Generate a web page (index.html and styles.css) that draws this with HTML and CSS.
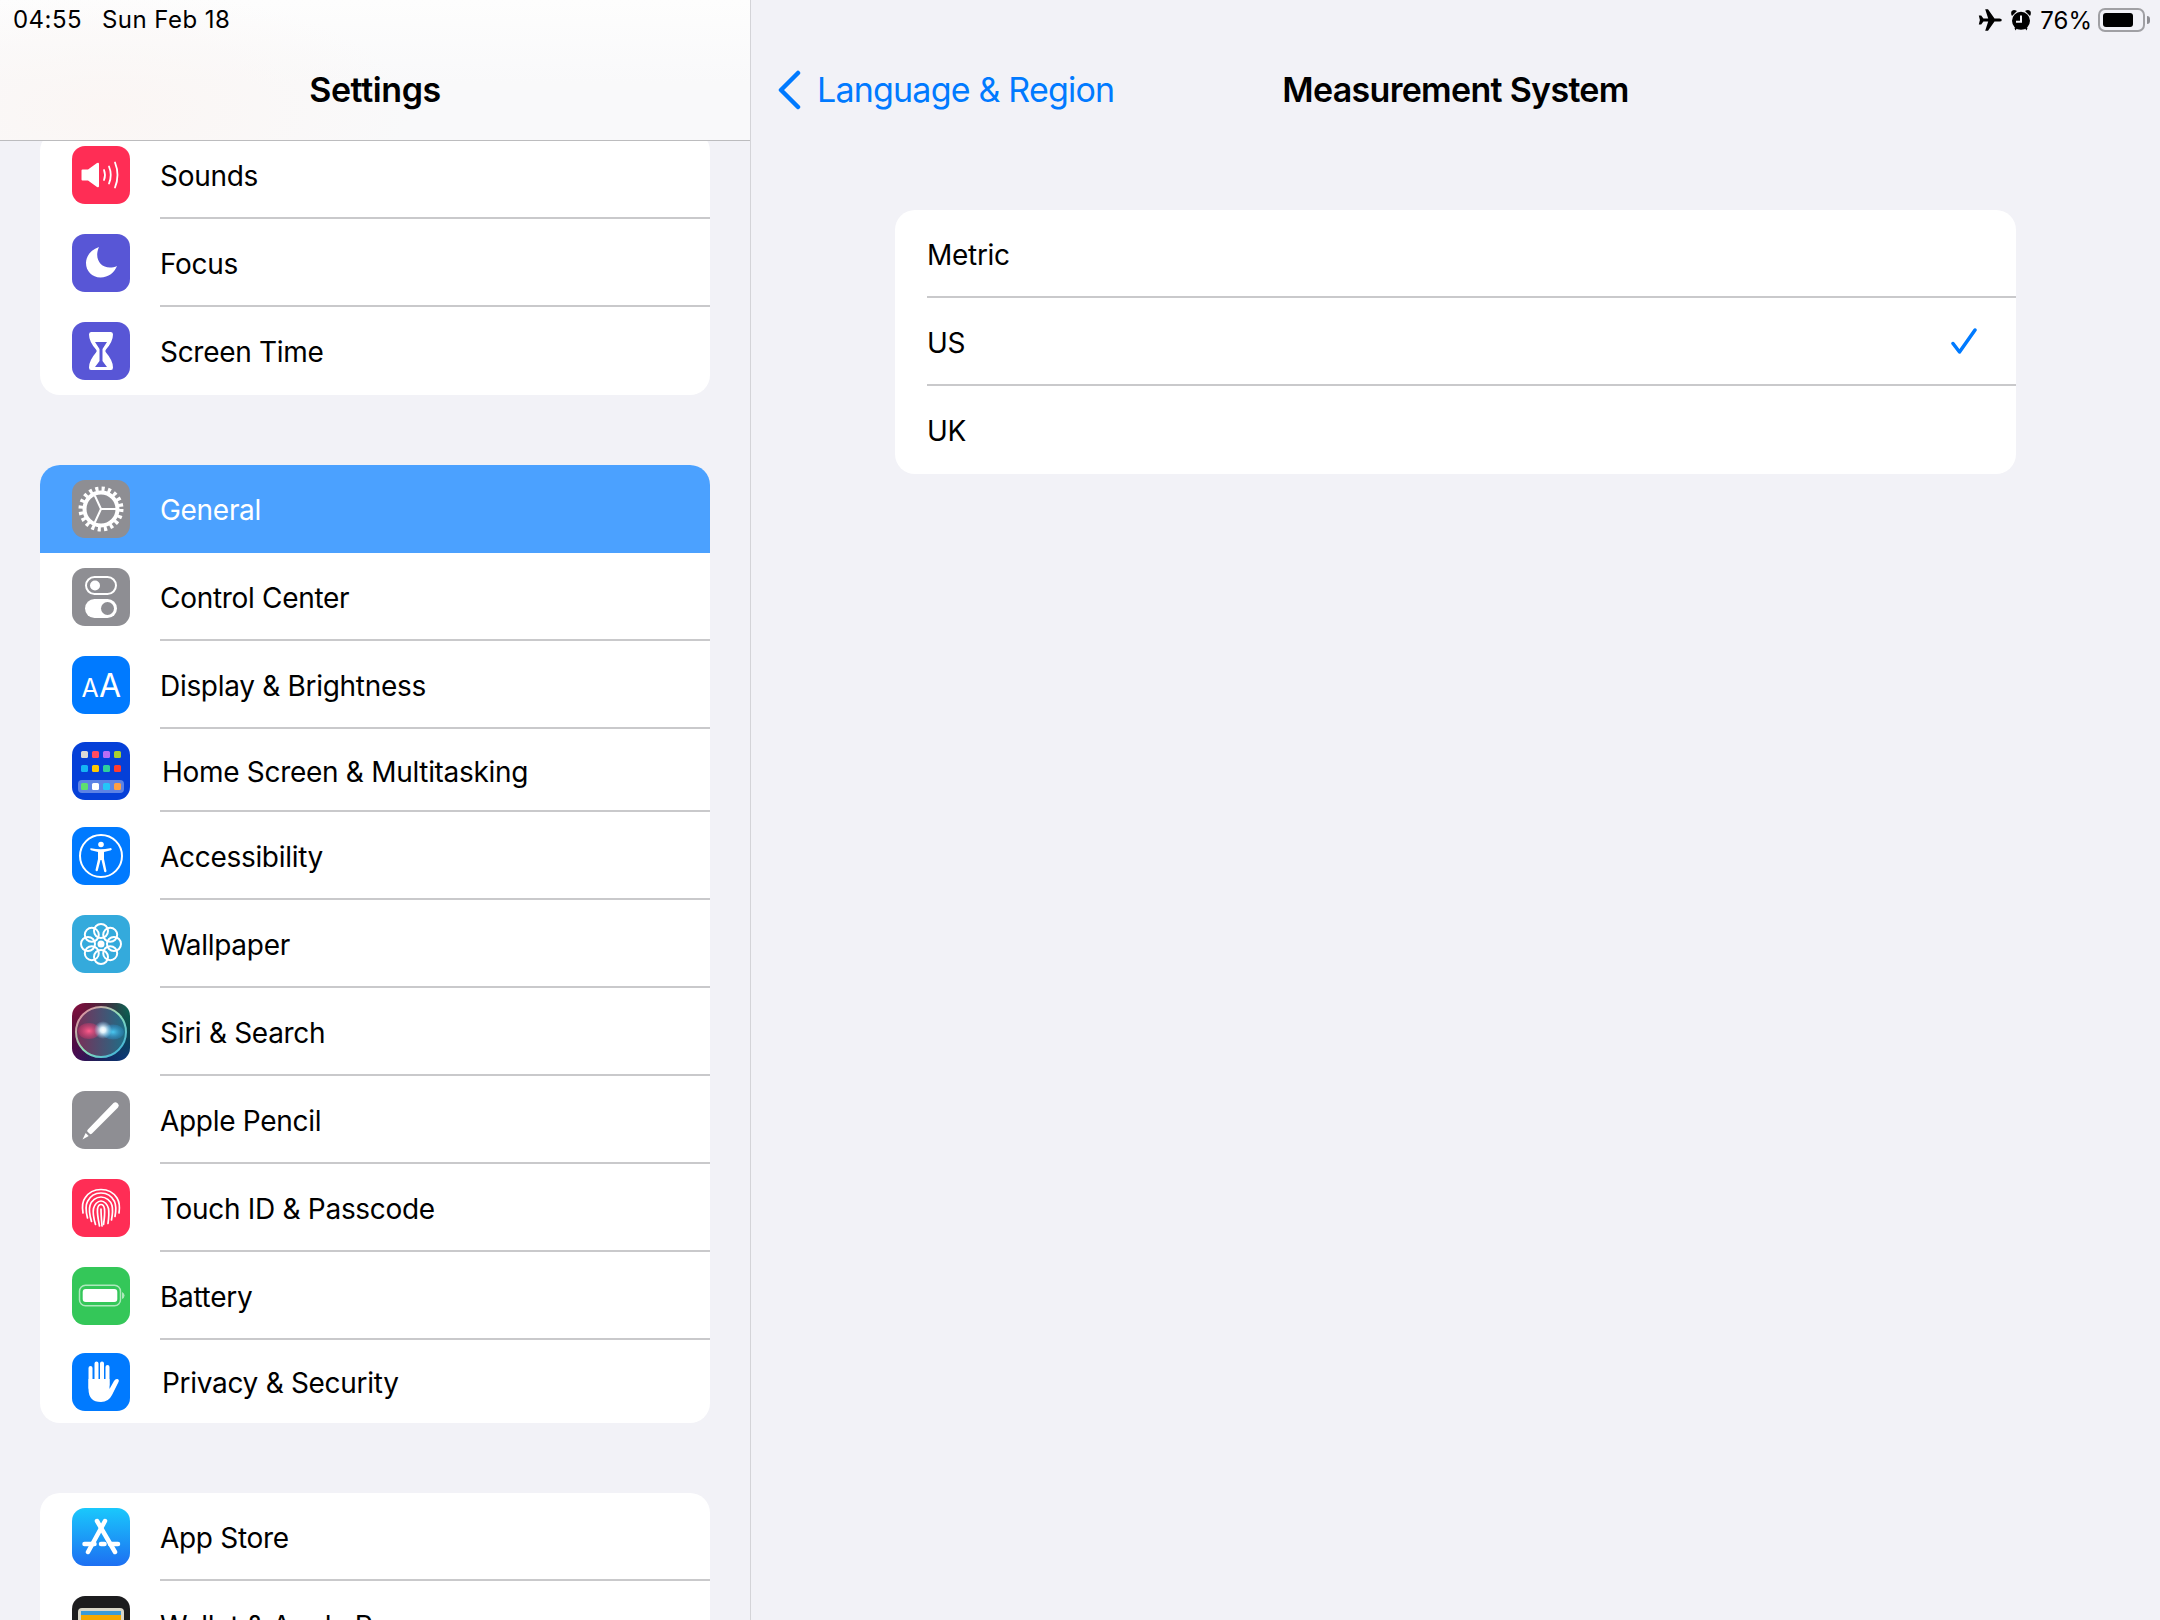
FILE: index.html
```html
<!DOCTYPE html>
<html lang="en">
<head>
<meta charset="utf-8">
<title>Settings</title>
<link rel="stylesheet" href="styles.css">
</head>
<body>
<div class="app">
  <aside class="sidebar">
    <header class="side-head">
      <div class="side-status"><span>04:55</span><span>Sun Feb 18</span></div>
      <h1 class="side-title">Settings</h1>
    </header>
    <div class="side-list">
      <section class="group">
        <div class="row">
          <span class="icon red"><svg viewBox="0 0 58 58"><path class="w" d="M10.500 23.500H16l9-6.500q2-1 2 1v22q0 2-2 1l-9-6.500h-5.500q-1 0-1-1V24.500q0-1 1-1z"/><g class="ln" stroke-width="1.800"><path d="M32 24q2 5 0 10"/><path d="M37 20.500q3.500 8.500 0 17"/><path d="M43 16.500q5 12.500 0 25"/></g></svg></span>
          <span class="label">Sounds</span>
        </div>
        <div class="row">
          <span class="icon indigo"><svg viewBox="0 0 58 58"><path class="w" d="M27 13C18 16 14 23 14 29c0 8 6 14.500 14.500 14.500 8 0 14-5 16.500-11.500-2 1-5 1.500-7 1.500C28 33.500 22 24 27 13z"/></svg></span>
          <span class="label">Focus</span>
        </div>
        <div class="row last">
          <span class="icon indigo"><svg viewBox="0 0 58 58"><path class="w" d="M19 10h20q2 0 2 2.500 0 7-7 15-1.500 1.500 0 3 7 8 7 15 0 2.500-2 2.500H19q-2 0-2-2.500 0-7 7-15 1.500-1.500 0-3-7-8-7-15 0-2.500 2-2.500z"/><path fill="#5856d6" d="M23 20h12l-4.500 7v12l4.500 6H23l4.500-6V27z"/></svg></span>
          <span class="label">Screen Time</span>
        </div>
      </section>

      <section class="group">
        <div class="row selected">
          <span class="icon gray"><svg viewBox="0 0 58 58"><circle class="ring" cx="29" cy="29" r="16.500" stroke-width="4"/><circle class="ring" cx="29" cy="29" r="20" stroke-width="5" stroke-dasharray="3.100 3.183"/><g class="ln" stroke-width="2"><path d="M29 29l-6-13M29 29h16M29 29l-6 13"/></g></svg></span>
          <span class="label">General</span>
        </div>
        <div class="row">
          <span class="icon gray"><svg viewBox="0 0 58 58"><rect class="ln" x="14" y="9" width="30" height="17" rx="8.500" stroke-width="2"/><circle class="w" cx="23" cy="17.500" r="5"/><rect class="w" x="13" y="31" width="32" height="19" rx="9.500"/><circle fill="#8e8e93" cx="35.500" cy="40.500" r="6.500"/></svg></span>
          <span class="label">Control Center</span>
        </div>
        <div class="row">
          <span class="icon blue"><svg viewBox="0 0 58 58"><text class="aa-s" x="9.500" y="41">A</text><text class="aa-l" x="27" y="41">A</text></svg></span>
          <span class="label">Display &amp; Brightness</span>
        </div>
        <div class="row short">
          <span class="icon royal"><svg viewBox="0 0 58 58">
            <rect fill="#d9d9d6" x="9" y="9" width="7" height="7" rx="1.500"/><rect fill="#ff4b5f" x="20" y="9" width="7" height="7" rx="1.500"/><rect fill="#b96df5" x="31" y="9" width="7" height="7" rx="1.500"/><rect fill="#a8d030" x="42" y="9" width="7" height="7" rx="1.500"/>
            <rect fill="#14b4f5" x="9" y="23" width="7" height="7" rx="1.500"/><rect fill="#ffc800" x="20" y="23" width="7" height="7" rx="1.500"/><rect fill="#2ecf9c" x="31" y="23" width="7" height="7" rx="1.500"/><rect fill="#ff3b30" x="42" y="23" width="7" height="7" rx="1.500"/>
            <rect fill="#fff" fill-opacity=".35" x="6" y="38" width="46" height="13" rx="4"/>
            <rect fill="#5ee06e" x="9" y="41" width="7" height="7" rx="1.500"/><rect fill="#fff" x="20" y="41" width="7" height="7" rx="1.500"/><rect fill="#25c5f8" x="31" y="41" width="7" height="7" rx="1.500"/><rect fill="#ff9f43" x="42" y="41" width="7" height="7" rx="1.500"/>
          </svg></span>
          <span class="label">Home Screen &amp; Multitasking</span>
        </div>
        <div class="row">
          <span class="icon blue"><svg viewBox="0 0 58 58"><circle class="ln" cx="29" cy="29" r="21" stroke-width="2"/><circle class="w" cx="29" cy="17.500" r="2.800"/><path class="w" d="M18.500 21.500q-.8 1.200.5 1.800l7 1.700v7l-2.500 11q0 1 1 1.200 1 .2 1.300-.8L28.500 33h1l2.700 11.400q.3 1 1.300.8 1-.2 1-1.200L32 32v-7l7-1.700q1.300-.6.5-1.800-.5-.6-1.500-.3-9.500 2.300-19 0-1-.3-.5.300z"/></svg></span>
          <span class="label">Accessibility</span>
        </div>
        <div class="row">
          <span class="icon sky"><svg viewBox="0 0 58 58"><g class="ln" stroke-width="2"><circle cx="29" cy="16" r="7"/><circle cx="29" cy="42" r="7"/><circle cx="16" cy="29" r="7"/><circle cx="42" cy="29" r="7"/><circle cx="19.800" cy="19.800" r="7"/><circle cx="38.200" cy="19.800" r="7"/><circle cx="19.800" cy="38.200" r="7"/><circle cx="38.200" cy="38.200" r="7"/></g><circle class="w" cx="29" cy="29" r="3.500"/></svg></span>
          <span class="label">Wallpaper</span>
        </div>
        <div class="row">
          <span class="icon siri"><svg viewBox="0 0 58 58">
            <defs>
              <linearGradient id="rim" x1="0" y1="0" x2="1" y2="1"><stop offset="0" stop-color="#f07a98"/><stop offset=".5" stop-color="#8fe0b8"/><stop offset="1" stop-color="#2fa8e0"/></linearGradient>
              <linearGradient id="disc" x1="0" y1="0" x2="1" y2="0"><stop offset="0" stop-color="#7a2f58"/><stop offset="1" stop-color="#1c6f88"/></linearGradient>
              <radialGradient id="core"><stop offset="0" stop-color="#fff"/><stop offset=".3" stop-color="#e8f8ff" stop-opacity=".95"/><stop offset="1" stop-color="#8fd8ff" stop-opacity="0"/></radialGradient>
              <radialGradient id="pink"><stop offset="0" stop-color="#ff5c8c"/><stop offset="1" stop-color="#e0386c" stop-opacity=".35"/></radialGradient>
              <radialGradient id="teal"><stop offset="0" stop-color="#4ac8f0"/><stop offset="1" stop-color="#2a8fc8" stop-opacity=".35"/></radialGradient>
            </defs>
            <circle cx="29" cy="29" r="25" fill="url(#disc)" stroke="url(#rim)" stroke-width="2"/>
            <ellipse cx="17" cy="28" rx="11" ry="8" fill="url(#pink)"/>
            <ellipse cx="41" cy="29" rx="11" ry="7.500" fill="url(#teal)"/>
            <circle cx="31" cy="27" r="9" fill="url(#core)"/>
          </svg></span>
          <span class="label">Siri &amp; Search</span>
        </div>
        <div class="row">
          <span class="icon gray"><svg viewBox="0 0 58 58"><path class="w" d="M41.500 12q2-1.700 3.700 0l.8.800q1.700 1.800 0 3.700L20 42.500q-1 1-2 .6l-2.700-2.700q-.4-1 .6-2z"/><path class="w" d="M10.500 48.500l3.200-6.500 3 3z"/></svg></span>
          <span class="label">Apple Pencil</span>
        </div>
        <div class="row">
          <span class="icon red"><svg viewBox="0 0 58 58"><g class="ln" stroke-width="1.700"><path d="M11 34c-1-6-1-11 2-15 3.500-5.500 9.500-8.500 16-8.500s12.500 3 16 8.500c2.500 4 3 8.500 2 15"/><path d="M15.500 39c-1.500-6-2.500-12 0-16.500C18 17.500 23 14 29 14s11 3.500 13.500 8.500c2 4.500 1.500 9.500.5 15"/><path d="M19.500 42.500c-1.500-5-3-11-1.500-16 1.500-5 6-8.500 11-8.500s9.500 3.500 11 8.500c1 4 .5 9-.5 14.500"/><path d="M23.500 45.500c-1.500-5-3-11-2-16 1-4 4-7.500 7.500-7.500s6.500 3.500 7.500 7.500c.7 4 .3 9-.5 15"/><path d="M27.500 47c-1-5-2.500-12-2-17 .3-2 1.500-4.500 3.500-4.500s3.200 2.500 3.500 4.500c.4 4 0 9-1 15.500"/><path d="M29 30c0 5 .5 11 1 17"/></g></svg></span>
          <span class="label">Touch ID &amp; Passcode</span>
        </div>
        <div class="row">
          <span class="icon green"><svg viewBox="0 0 58 58"><rect fill="none" stroke="#fff" stroke-opacity=".6" stroke-width="1.500" x="7.500" y="18.200" width="41" height="20.600" rx="6"/><rect class="w" x="10.700" y="22" width="34.600" height="13" rx="3"/><path fill="#fff" fill-opacity=".6" d="M50 25q2.500 1 2.500 3.500T50 32z"/></svg></span>
          <span class="label">Battery</span>
        </div>
        <div class="row short last">
          <span class="icon blue"><svg viewBox="0 0 58 58"><g class="ln" stroke-width="4"><path d="M18.500 35V15M24.500 30V10.500M30 30V10.500M35.500 32V14"/></g><path class="w" d="M16.500 26h21v10l4.500-8q1.500-2.500 3.500-2 2 .6 1 3L40 42q-3.500 7-11 7-12.500 0-12.500-13z"/></svg></span>
          <span class="label">Privacy &amp; Security</span>
        </div>
      </section>

      <section class="group">
        <div class="row">
          <span class="icon store"><svg viewBox="0 0 58 58"><g class="ln" stroke-width="4.500"><path d="M33 13 16 44"/><path d="M25 13l18 31"/><path d="M12.500 36h10M29 36h3.500M38 36h8"/></g></svg></span>
          <span class="label">App Store</span>
        </div>
        <div class="row last">
          <span class="icon wallet"><svg viewBox="0 0 58 58"><rect fill="#d9d6c8" x="6" y="12" width="46" height="38" rx="4"/><rect fill="#3a9bd8" x="9" y="15" width="40" height="6"/><rect fill="#f5a800" x="9" y="19" width="40" height="8"/><rect fill="#4cb050" x="9" y="26" width="40" height="8"/><rect fill="#e84a3c" x="9" y="33" width="40" height="8"/></svg></span>
          <span class="label">Wallet &amp; Apple Pay</span>
        </div>
      </section>
    </div>
  </aside>

  <main class="detail">
    <div class="status">
      <svg class="st-plane" viewBox="0 0 24 24"><path d="M23.800 12q0-1.600-2.300-1.600h-5L10 1.200H7.200l3 9.200H5.400L3.200 7.500H.8L1.900 12 .8 16.500h2.400l2.200-2.900h4.800l-3 9.200H10l6.500-9.200h5q2.300 0 2.300-1.600z"/></svg>
      <svg class="st-alarm" viewBox="0 0 20 22"><path d="M1 7 6 2Q2-.2.400 2.600-.3 5 1 7zM19 7l-5-5q4-2.200 5.600.6.700 2.400-.6 4.400z"/><path fill-rule="evenodd" d="M10 2.800a9 9 0 1 1 0 18 9 9 0 0 1 0-18zM9 6.500v5.300H5v1.900h6V6.500z"/><path d="M3.500 19l2-1.500 1 1L4.500 21.500zM16.500 19l-2-1.500-1 1 2 3z"/></svg>
      <span class="st-pct">76%</span>
      <span class="st-batt"><span class="st-fill"></span></span>
      <span class="st-nub"></span>
    </div>
    <nav class="nav">
      <a class="back"><svg class="chev" viewBox="0 0 24 40"><path d="M21 3 4 20l17 17"/></svg><span>Language &amp; Region</span></a>
      <h2 class="nav-title">Measurement System</h2>
    </nav>
    <section class="card">
      <div class="opt"><span>Metric</span></div>
      <div class="opt"><span>US</span><svg class="check" viewBox="0 0 28 26"><path d="M3 15.500 9.500 24 25 2"/></svg></div>
      <div class="opt"><span>UK</span></div>
    </section>
  </main>
</div>
</body>
</html>
```
FILE: styles.css
```css
* { box-sizing: border-box; }
html, body { margin: 0; padding: 0; }
body {
  width: 2160px;
  height: 1620px;
  overflow: hidden;
  background: #f2f2f7;
  color: #000;
  font-family: Inter, "Noto Sans", "Liberation Sans", sans-serif;
}
.app { display: flex; height: 1620px; }

/* Sidebar */
.sidebar {
  position: relative;
  width: 751px;
  height: 1620px;
  flex: none;
  overflow: hidden;
  border-right: 1px solid #d4d4d8;
  background: #f2f2f7;
}
.side-head {
  position: absolute;
  top: 0;
  left: 0;
  right: 0;
  z-index: 2;
  height: 141px;
  border-bottom: 1px solid #bcbcbe;
  background:
    radial-gradient(ellipse 300px 120px at 110px 110px, #fbf6f4, transparent),
    linear-gradient(180deg, #fdfdfd 0%, #f9f9fa 60%, #f9f9fa 100%);
}
.side-status {
  display: flex;
  gap: 20px;
  height: 40px;
  padding: 0 0 1px 13px;
  align-items: center;
  font-size: 24px;
  letter-spacing: .45px;
}
.side-title {
  margin: 0;
  height: 98px;
  display: flex;
  align-items: center;
  justify-content: center;
  font-size: 34px;
  font-weight: 600;
  letter-spacing: -.4px;
}
.side-list { padding: 131px 40px 0; }

.group {
  background: #fff;
  border-radius: 20px;
  overflow: hidden;
  margin-bottom: 70px;
}
.row {
  display: flex;
  align-items: center;
  height: 88px;
  padding-left: 32px;
  gap: 30px;
}
.row.short { height: 83px; }
.row.short .label { padding-left: 2px; }
.label {
  flex: 1;
  display: flex;
  align-items: center;
  height: 100%;
  padding-top: 4px;
  font-size: 28px;
  letter-spacing: -.3px;
  border-bottom: 2px solid #c9c9cb;
}
.row.last .label,
.row.selected .label { border-bottom-color: transparent; }
.row.selected { background: #4ba1ff; color: #fff; }

.icon {
  display: block;
  flex: none;
  width: 58px;
  height: 58px;
  border-radius: 13px;
  overflow: hidden;
}
.icon svg { display: block; width: 58px; height: 58px; }
.w { fill: #fff; }
.ln { fill: none; stroke: #fff; stroke-linecap: round; stroke-linejoin: round; }
.ln * { fill: none; }
.ring { fill: none; stroke: #fff; }
.red { background: #ff2d55; }
.indigo { background: #5856d6; }
.gray { background: #8e8e93; }
.blue { background: #007aff; }
.royal { background: #0540d8; }
.sky { background: #34aadc; }
.green { background: #34c759; }
.store { background: linear-gradient(180deg, #1ac8fc, #1d6ff2); }
.wallet { background: #1c1c1e; }
.siri {
  background:
    radial-gradient(circle at 0 0, #8a0f42, transparent 70%),
    radial-gradient(circle at 100% 0, #0c6a58, transparent 70%),
    radial-gradient(circle at 100% 100%, #0a3a80, transparent 70%),
    radial-gradient(circle at 0 100%, #4a0a5a, transparent 70%),
    #101018;
}
.aa-s { font-size: 25px; font-weight: 400; fill: #fff; }
.aa-l { font-size: 32px; font-weight: 400; fill: #fff; }

/* Detail */
.detail { flex: 1; min-width: 0; display: flex; flex-direction: column; }
.status {
  display: flex;
  align-items: center;
  justify-content: flex-end;
  height: 40px;
  padding-right: 10px;
}
.st-plane { width: 24px; height: 24px; margin-right: 9px; fill: #000; }
.st-alarm { width: 20px; height: 22px; margin-right: 9px; fill: #000; }
.st-pct { font-size: 24px; margin-right: 6px; }
.st-batt {
  display: block;
  width: 47px;
  height: 24px;
  border: 2px solid #a0a0a4;
  border-radius: 7px;
  padding: 3px;
}
.st-fill { display: block; width: 30px; height: 14px; background: #000; border-radius: 3px; }
.st-nub {
  display: block;
  width: 3px;
  height: 8px;
  margin-left: 2px;
  background: #8e8e93;
  border-radius: 0 3px 3px 0;
}
.nav {
  display: grid;
  grid-template-columns: 1fr auto 1fr;
  align-items: center;
  height: 100px;
}
.back {
  display: flex;
  align-items: center;
  gap: 16px;
  padding-left: 26px;
  color: #007aff;
  font-size: 34px;
  letter-spacing: -.8px;
}
.back span { padding-bottom: 2px; }
.chev { width: 24px; height: 40px; fill: none; stroke: #007aff; stroke-width: 4.500; stroke-linecap: round; stroke-linejoin: round; }
.nav-title {
  grid-column: 2;
  margin: 0;
  padding-bottom: 2px;
  font-size: 34px;
  font-weight: 600;
  letter-spacing: -.7px;
}
.card {
  margin: 70px 144px 0;
  background: #fff;
  border-radius: 20px;
  overflow: hidden;
  padding-left: 32px;
}
.opt {
  display: flex;
  align-items: center;
  justify-content: space-between;
  height: 88px;
  padding: 4px 38px 0 0;
  font-size: 28px;
  letter-spacing: -.3px;
  border-bottom: 2px solid #c9c9cb;
}
.opt:last-child { border-bottom-color: transparent; }
.check { width: 28px; height: 26px; margin-top: -4px; fill: none; stroke: #007aff; stroke-width: 3.500; stroke-linecap: round; stroke-linejoin: round; }
```
